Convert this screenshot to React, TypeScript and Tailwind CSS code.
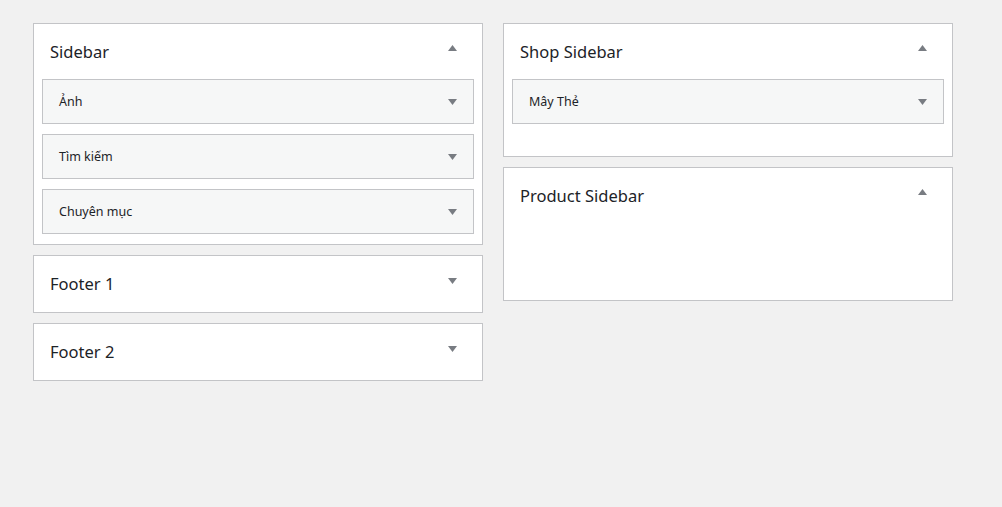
import React from 'react';

type Area = {
  title: string;
  open: boolean;
  widgets: string[];
};

const left: Area[] = [
  { title: 'Sidebar', open: true, widgets: ['Ảnh', 'Tìm kiếm', 'Chuyên mục'] },
  { title: 'Footer 1', open: false, widgets: [] },
  { title: 'Footer 2', open: false, widgets: [] },
];

const right: Area[] = [
  { title: 'Shop Sidebar', open: true, widgets: ['Mây Thẻ'] },
  { title: 'Product Sidebar', open: true, widgets: [] },
];

const Arrow = ({ up }: { up?: boolean }) => (
  <svg width="9" height="6" viewBox="0 0 9 6" className="block">
    {up ? <path d="M4.5 0 L9 6 L0 6 Z" fill="#787c82" /> : <path d="M0 0 L9 0 L4.5 6 Z" fill="#787c82" />}
  </svg>
);

const WidgetRow = ({ name }: { name: string }) => (
  <div className="flex h-[45px] items-center justify-between border border-[#c3c4c7] bg-[#f6f7f7] pl-4 pr-[16px]">
    <span className="pt-[2px] text-[12.5px] text-[#1d2327]">{name}</span>
    <Arrow />
  </div>
);

const SidebarBox = ({ area }: { area: Area }) => (
  <div className="border border-[#c3c4c7] bg-white">
    <div className={`flex items-start justify-between pl-4 pr-[25px] ${area.open ? 'h-[55px] pt-[15px]' : 'h-[56px] pt-[15px]'}`}>
      <h3 className="text-[16.5px] font-normal leading-[26px] text-[#1d2327]">{area.title}</h3>
      <div className={area.open ? 'pt-[6px]' : 'pt-[7px]'}>
        <Arrow up={area.open} />
      </div>
    </div>
    {area.open && (
      <div className="flex min-h-[77px] flex-col gap-[10px] px-2 pb-[10px]">
        {area.widgets.map((w) => (
          <WidgetRow key={w} name={w} />
        ))}
      </div>
    )}
  </div>
);

export default function App() {
  return (
    <div
      className="min-h-[507px] w-full bg-[#f1f1f1] pl-[33px] pt-[23px]"
      style={{ fontFamily: '"Noto Sans", "Open Sans", sans-serif' }}
    >
      <div className="flex items-start gap-[20px]">
        <div className="flex w-[450px] flex-col gap-[10px]">
          {left.map((a) => (
            <SidebarBox key={a.title} area={a} />
          ))}
        </div>
        <div className="flex w-[450px] flex-col gap-[10px]">
          {right.map((a) => (
            <SidebarBox key={a.title} area={a} />
          ))}
        </div>
      </div>
    </div>
  );
}
